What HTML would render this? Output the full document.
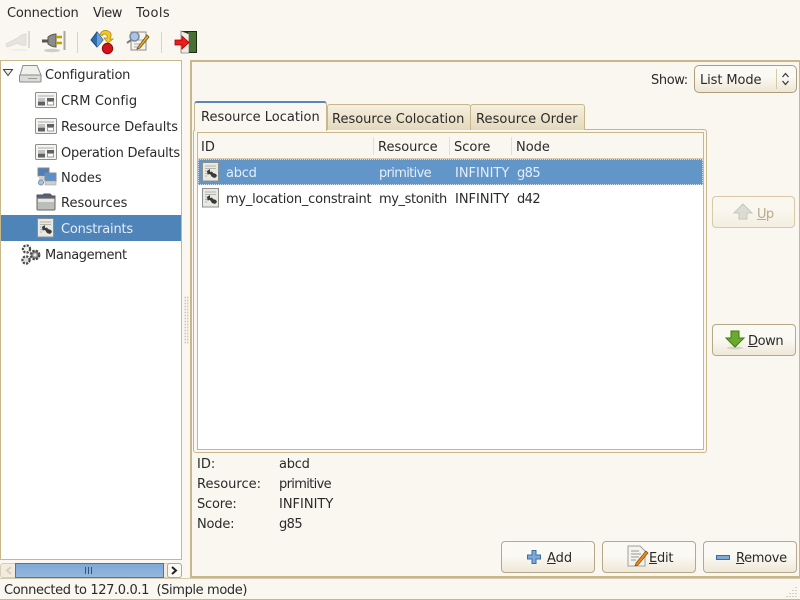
<!DOCTYPE html>
<html><head><meta charset="utf-8">
<style>
html,body{margin:0;padding:0;width:800px;height:600px;overflow:hidden;background:#faf7f0;}
body{position:relative;font-family:"DejaVu Sans",sans-serif;font-size:13px;color:#2a2a2a;}
.a{position:absolute;box-sizing:border-box;}
.t{position:absolute;white-space:pre;line-height:16px;height:16px;margin-top:2px;}
.btn{position:absolute;box-sizing:border-box;border:1px solid #b5a98a;border-radius:4px;background:linear-gradient(#fbf9f4 0%,#fbf9f4 45%,#efe8d8 100%);}
svg{position:absolute;overflow:visible;}
u{text-decoration:underline;}
</style></head><body>

<!-- menu -->
<div class="t" style="left:7px;top:4px;letter-spacing:-.2px">Connection</div>
<div class="t" style="left:93px;top:4px;letter-spacing:-.5px">View</div>
<div class="t" style="left:136px;top:4px;letter-spacing:.4px">Tools</div>

<!-- toolbar -->
<svg style="left:5px;top:30px" width="26" height="22" viewBox="0 0 26 22">
<path d="M1 14L13 8Q17 4 21 4L21 15Q16 16 13 13L2 17Z" fill="#e6e4de" stroke="#dcdad4"/><path d="M24 1V18" stroke="#dcdad4" stroke-width="2"/><ellipse cx="14" cy="20" rx="9" ry="1.2" fill="#f0eee8"/></svg>
<svg style="left:42px;top:30px" width="26" height="24" viewBox="0 0 26 24">
<ellipse cx="10" cy="20.5" rx="8" ry="1.8" fill="#d0cec8"/>
<path d="M0 11H7" stroke="#555" stroke-width="3"/><path d="M6 7Q10 4 14 4V17Q10 17 6 14Z" fill="#8b8d89" stroke="#555"/>
<path d="M14 7H20M14 13H20" stroke="#c4a000" stroke-width="2.5"/><path d="M22.5 1V20" stroke="#a9a79f" stroke-width="2"/></svg>
<div class="a" style="left:77px;top:32px;width:1px;height:21px;background:#dcd3bd"></div>
<svg style="left:90px;top:29px" width="26" height="26" viewBox="0 0 26 26">
<path d="M1 11L7 3L13 11L7 18Z" fill="#2f6db0" stroke="#1d4a80"/><path d="M7 3L13 11L7 18Z" fill="#6ba0d6"/>
<path d="M10 5Q13 0 18 2Q23 4 20 10L23 10L18 14L14 9L17 9Q18 6 15 5Q13 5 12 7Z" fill="#f2c62e" stroke="#b58b00" stroke-width=".8"/>
<circle cx="17.5" cy="19.5" r="5.2" fill="#d3131a" stroke="#8a0c10"/></svg>
<svg style="left:126px;top:30px" width="26" height="24" viewBox="0 0 26 24">
<rect x="5" y="2" width="15" height="18" fill="#f4f3ee" stroke="#8d8d88"/><path d="M12 10H17M8 14H15M8 17H14" stroke="#aaa"/>
<circle cx="8.5" cy="6.5" r="4.5" fill="#a9c4e4" stroke="#7b8a9c" stroke-width="1.5"/><path d="M5 10L1 13" stroke="#777" stroke-width="2"/>
<path d="M12 17L21 5L23 7L14 18L11 19Z" fill="#e9a92e" stroke="#6b5316" stroke-width=".8"/></svg>
<div class="a" style="left:161px;top:32px;width:1px;height:21px;background:#dcd3bd"></div>
<svg style="left:175px;top:31px" width="23" height="23" viewBox="0 0 23 23">
<rect x="6" y="0" width="16" height="22" fill="#1c2b14"/><rect x="13" y="1" width="8" height="20" fill="#4a7033"/><path d="M6 0L14 3V22L6 22Z" fill="#eeece4" stroke="#555" stroke-width=".6"/>
<path d="M0 9H7V5L14 11.5L7 18V14H0Z" fill="#ef1b1b" stroke="#a40000" stroke-width=".8"/></svg>

<!-- tree panel -->
<div class="a" style="left:0;top:60px;width:182px;height:500px;background:#fff;border:1px solid #c9b78c"></div>
<svg style="left:3px;top:69px" width="10" height="8"><path d="M.5 .5H9.5L5 6.5Z" fill="#f2efe7" stroke="#3f3f3f"/></svg>
<svg style="left:19px;top:65px" width="23" height="18" viewBox="0 0 23 18"><path d="M4 .5H18L22 10H1Z" fill="#f0f0ec" stroke="#8f8f8c"/><rect x=".5" y="10" width="21.5" height="7" rx="1" fill="#dcdcd7" stroke="#8a8a87"/><path d="M9 13.5H18" stroke="#9a9a96"/></svg>
<div class="t" style="left:45px;top:66px;letter-spacing:-.23px">Configuration</div>

<svg width="0" height="0" style="position:absolute"><defs>
<g id="cfg"><rect x=".5" y=".5" width="21" height="15" rx="1" fill="#f4f4f1" stroke="#8e8e8b"/><rect x="3" y="3" width="16" height="2" fill="#d0d0ce"/><rect x="3" y="6" width="7" height="3" fill="#c4c4c2"/><rect x="3" y="9.5" width="7" height="4" fill="#5d6264"/><rect x="12" y="6" width="7" height="3" fill="#5d6264"/><rect x="12.5" y="9.5" width="6" height="3.5" fill="#fff" stroke="#777" stroke-width=".7"/></g>
<g id="con"><rect x=".5" y=".5" width="16" height="18.5" fill="#e9e9e4" stroke="#8e8e8b"/><path d="M3 4H14M3 6.5H14M3 9H6M3 11.5H5M3 14H5" stroke="#b4b4b0"/><path d="M5 9L8 7L8 10L10 9.5L11 11L14 12L15 14L13 16L10 15L8 12L5.5 12.5Z" fill="#3a3a3a"/></g>
</defs></svg>

<svg style="left:35px;top:92px" width="22" height="16"><use href="#cfg"/></svg>
<div class="t" style="left:61px;top:92px;letter-spacing:.1px">CRM Config</div>
<svg style="left:35px;top:118px" width="22" height="16"><use href="#cfg"/></svg>
<div class="t" style="left:61px;top:118px;letter-spacing:-.06px">Resource Defaults</div>
<svg style="left:35px;top:144px" width="22" height="16"><use href="#cfg"/></svg>
<div class="t" style="left:61px;top:144px;letter-spacing:-.23px">Operation Defaults</div>
<svg style="left:37px;top:167px" width="20" height="20" viewBox="0 0 20 20"><rect x="1" y="1" width="11" height="8" fill="#4d7fbf" stroke="#8a8a8a"/><rect x="2" y="9" width="9" height="4" fill="#d0d0cc"/><rect x="8" y="6" width="11" height="8" fill="#5a8fd0" stroke="#888"/><rect x="8" y="14" width="11" height="4" fill="#cfcfcb" stroke="#999" stroke-width=".5"/><circle cx="4" cy="15.5" r="2.5" fill="#a9c2de" stroke="#7a8fa8"/></svg>
<div class="t" style="left:61px;top:169px">Nodes</div>
<svg style="left:36px;top:193px" width="20" height="18" viewBox="0 0 20 18"><path d="M1 2H7L8 1H14L16 3H19V6H1Z" fill="#55617a" stroke="#555"/><path d="M1 5H19V16Q19 17 18 17H2Q1 17 1 16Z" fill="#bdbdb9" stroke="#666"/><rect x="2" y="6" width="16" height="3" fill="#e6e6e3"/></svg>
<div class="t" style="left:61px;top:194px">Resources</div>
<div class="a" style="left:1px;top:215px;width:180px;height:26px;background:#4f84b9"></div>
<svg style="left:37px;top:218px" width="18" height="20"><use href="#con"/></svg>
<div class="t" style="left:61px;top:220px;color:#e4edf6;letter-spacing:-.2px">Constraints</div>
<svg style="left:20px;top:243px" width="22" height="22" viewBox="0 0 22 22">
<circle cx="6.5" cy="6" r="3.6" fill="#f2f2ee" stroke="#4a4a4a" stroke-width="2.2" stroke-dasharray="2.2 1.2"/><circle cx="15" cy="12" r="4.2" fill="#8a8a86" stroke="#4a4a4a" stroke-width="2.4" stroke-dasharray="2.2 1.2"/><circle cx="15" cy="12" r="1.6" fill="#eee"/><circle cx="6" cy="17" r="3.6" fill="#ddd" stroke="#4a4a4a" stroke-width="2.2" stroke-dasharray="2.2 1.2"/></svg>
<div class="t" style="left:45px;top:246px;letter-spacing:-.4px">Management</div>

<!-- hscroll -->
<div class="a" style="left:0;top:563px;width:182px;height:15px;background:#f1ecdf;border:1px solid #d6cdb6;border-radius:3px"></div>
<svg style="left:5px;top:566px" width="8" height="9"><path d="M6 1L2 4.5L6 8" fill="none" stroke="#d8d0ba" stroke-width="2"/></svg>
<div class="a" style="left:15px;top:563px;width:149px;height:15px;background:linear-gradient(#7ea8d6,#94b7dd);border:1px solid #4a76a8"></div>
<div class="a" style="left:85px;top:567px;width:7px;height:7px;background:repeating-linear-gradient(90deg,#33557a 0 1px,transparent 1px 3px)"></div>
<div class="a" style="left:167px;top:563px;width:15px;height:15px;background:#fbf9f4;border:1px solid #b5a98a;border-radius:3px"></div>
<svg style="left:170px;top:566px" width="8" height="9"><path d="M2 1L6 4.5L2 8" fill="none" stroke="#222" stroke-width="2"/></svg>

<!-- handle -->
<div class="a" style="left:184px;top:296px;width:5px;height:48px;background:radial-gradient(circle,#cfc9b4 0 .8px,transparent 1px) 0 0/2.5px 3px"></div>

<!-- main frame -->
<div class="a" style="left:190px;top:60px;width:610px;height:518px;border:2px solid #c9b78c;border-right:1px solid #c9b78c;background:#faf7f0"></div>

<div class="t" style="left:651px;top:71px;letter-spacing:-.4px">Show:</div>
<div class="btn" style="left:694px;top:65px;width:103px;height:28px;border-radius:5px;border-color:#ad9f7e;background:linear-gradient(#fbf9f4 40%,#eee6d3)"></div>
<div class="t" style="left:700px;top:71px;letter-spacing:-.1px">List Mode</div>
<div class="a" style="left:776px;top:69px;width:1px;height:20px;background:#d6c9a8"></div>
<svg style="left:781px;top:72px" width="10" height="14"><path d="M1.5 5L4.5 1.5L7.5 5M1.5 9L4.5 12.5L7.5 9" fill="none" stroke="#333" stroke-width="1.2"/></svg>

<!-- tab notebook -->
<div class="a" style="left:193px;top:129px;width:514px;height:324px;border:1px solid #c9b78c;border-radius:3px;background:#faf7f0"></div>
<div class="a" style="left:327px;top:104px;width:144px;height:26px;border:1px solid #c9b78c;border-bottom:none;border-radius:3px 3px 0 0;background:linear-gradient(#f5efe0,#e4d9bc)"></div>
<div class="a" style="left:470px;top:104px;width:115px;height:26px;border:1px solid #c9b78c;border-bottom:none;border-radius:3px 3px 0 0;background:linear-gradient(#f5efe0,#e4d9bc)"></div>
<div class="a" style="left:194px;top:101px;width:133px;height:30px;border:1px solid #c9b78c;border-top:2px solid #5a87b8;border-bottom:none;border-radius:3px 3px 0 0;background:#faf7f0"></div>
<div class="t" style="left:201px;top:108px">Resource Location</div>
<div class="t" style="left:332px;top:110px">Resource Colocation</div>
<div class="t" style="left:476px;top:110px;letter-spacing:.07px">Resource Order</div>

<!-- table -->
<div class="a" style="left:197px;top:132px;width:507px;height:318px;background:#fff;border:1px solid #c9b78c"></div>
<div class="a" style="left:198px;top:133px;width:505px;height:26px;background:#faf7f0;border-bottom:1px solid #d6cbb0"></div>
<div class="a" style="left:373px;top:137px;width:1px;height:18px;background:#e6dfcc"></div>
<div class="a" style="left:449px;top:137px;width:1px;height:18px;background:#e6dfcc"></div>
<div class="a" style="left:511px;top:137px;width:1px;height:18px;background:#e6dfcc"></div>
<div class="t" style="left:201px;top:138px">ID</div>
<div class="t" style="left:378px;top:138px">Resource</div>
<div class="t" style="left:454px;top:138px">Score</div>
<div class="t" style="left:516px;top:138px">Node</div>
<div class="a" style="left:198px;top:159px;width:505px;height:26px;background:#6296c9;border:1px dotted #d5e2ef"></div>
<svg style="left:202px;top:162px" width="18" height="20"><use href="#con"/></svg>
<div class="t" style="left:226px;top:164px;color:#e6eef7;letter-spacing:-.25px">abcd</div>
<div class="t" style="left:379px;top:164px;color:#e6eef7;letter-spacing:-.66px">primitive</div>
<div class="t" style="left:455px;top:164px;color:#e6eef7">INFINITY</div>
<div class="t" style="left:517px;top:164px;color:#e6eef7;letter-spacing:-.6px">g85</div>
<svg style="left:202px;top:188px" width="18" height="20"><use href="#con"/></svg>
<div class="t" style="left:226px;top:190px;letter-spacing:-.23px">my_location_constraint</div>
<div class="t" style="left:379px;top:190px;letter-spacing:-.4px">my_stonith</div>
<div class="t" style="left:455px;top:190px">INFINITY</div>
<div class="t" style="left:517px;top:190px;letter-spacing:-.6px">d42</div>

<!-- side buttons -->
<div class="btn" style="left:712px;top:196px;width:83px;height:32px;border-color:#d6c9a8;background:linear-gradient(#faf7f0 40%,#f3eee0)"></div>
<svg style="left:734px;top:203px" width="20" height="19" viewBox="0 0 20 19"><path d="M9 1L18 10H13V16H5V10H0Z" fill="#dcdcd4" stroke="#c6c6bc"/></svg>
<div class="t" style="left:757px;top:205px;color:#b8ab8a;letter-spacing:-.6px"><u>U</u>p</div>
<div class="btn" style="left:712px;top:324px;width:84px;height:32px"></div>
<svg style="left:725px;top:330px" width="20" height="20" viewBox="0 0 20 20"><ellipse cx="10" cy="18" rx="8" ry="1.5" fill="#d6d2c6"/><path d="M6 1H14V8H19L10 17L1 8H6Z" fill="#6aaa2e" stroke="#3f7a12"/></svg>
<div class="t" style="left:748px;top:332px;letter-spacing:-.4px"><u>D</u>own</div>

<!-- details -->
<div class="t" style="left:197px;top:455px">ID:</div><div class="t" style="left:279px;top:455px;letter-spacing:-.25px">abcd</div>
<div class="t" style="left:197px;top:475px">Resource:</div><div class="t" style="left:279px;top:475px;letter-spacing:-.66px">primitive</div>
<div class="t" style="left:197px;top:495px;letter-spacing:-.2px">Score:</div><div class="t" style="left:279px;top:495px">INFINITY</div>
<div class="t" style="left:197px;top:515px;letter-spacing:-.2px">Node:</div><div class="t" style="left:279px;top:515px;letter-spacing:-.6px">g85</div>

<!-- bottom buttons -->
<div class="btn" style="left:501px;top:541px;width:94px;height:32px"></div>
<svg style="left:527px;top:550px" width="14" height="14"><path d="M5 .5H9V5H13.5V9H9V13.5H5V9H.5V5H5Z" fill="#7ea8d8" stroke="#3a6ea5"/></svg>
<div class="t" style="left:547px;top:549px"><u>A</u>dd</div>
<div class="btn" style="left:602px;top:541px;width:94px;height:32px"></div>
<svg style="left:627px;top:545px" width="22" height="24" viewBox="0 0 22 24"><path d="M1 1H13L18 6V21H1Z" fill="#f4f3ee" stroke="#a0a09a"/><path d="M4 6H12M4 9H14M4 12H12M4 15H9" stroke="#999"/><path d="M9 18L19 6L21 8L11 20L8 21Z" fill="#f08a16" stroke="#7a4a10" stroke-width=".7"/></svg>
<div class="t" style="left:649px;top:549px;letter-spacing:-.25px"><u>E</u>dit</div>
<div class="btn" style="left:703px;top:541px;width:94px;height:32px"></div>
<div class="a" style="left:716px;top:555px;width:14px;height:5px;background:#7ea8d8;border:1px solid #3a6ea5"></div>
<div class="t" style="left:736px;top:549px;letter-spacing:-.33px"><u>R</u>emove</div>

<!-- status -->
<div class="a" style="left:0;top:578px;width:800px;height:22px;background:#faf7f0;border-top:1px solid #d6cbb0;border-bottom:1px solid #c9b78c"></div>
<div class="t" style="left:4px;top:581px;letter-spacing:-.38px">Connected to 127.0.0.1  (Simple mode)</div>
<svg style="left:786px;top:586px" width="12" height="12"><path d="M10 1V2M7 4V5M10 4V5M4 7V8M7 7V8M10 7V8M1 10V11M4 10V11M7 10V11M10 10V11" stroke="#c9c1aa" stroke-width="1.5"/></svg>
</body></html>
